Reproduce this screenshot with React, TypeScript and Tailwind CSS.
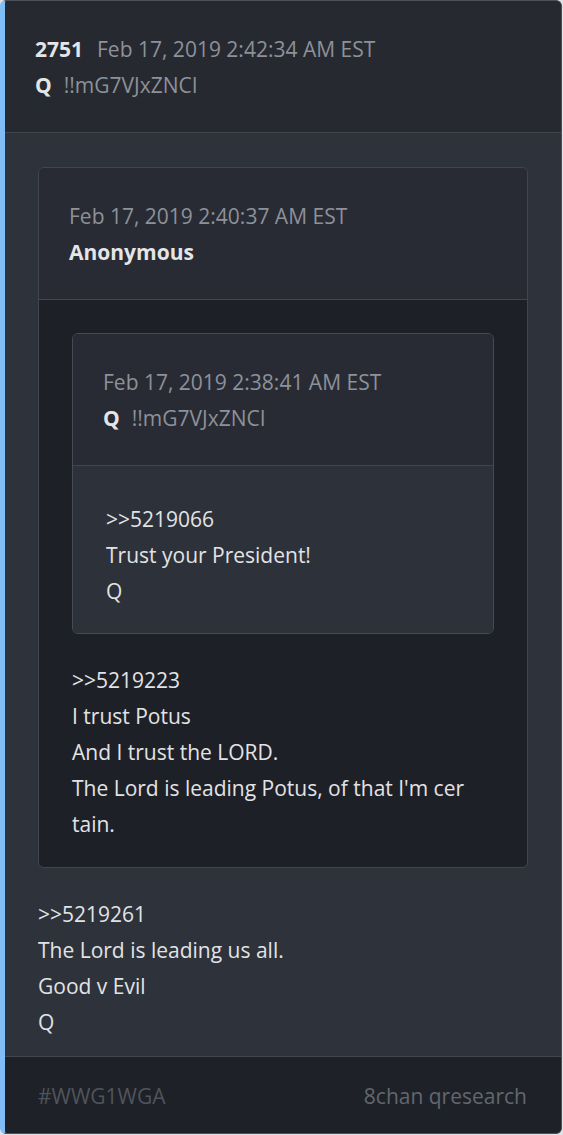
type Post = {
  date: string;
  name: string;
  trip?: string;
};

function PostHeader({ post, num }: { post: Post; num?: string }) {
  return (
    <div>
      <div className="flex items-center h-[36px]">
        {num && <span className="font-bold text-[#e4e5e7] mr-[14px]">{num}</span>}
        <span className="text-[#8d9199]">{post.date}</span>
      </div>
      <div className="flex items-center h-[36px]">
        <span className="font-bold text-[#e4e5e7]">{post.name}</span>
        {post.trip && <span className="ml-[12px] text-[#8d9199]">{post.trip}</span>}
      </div>
    </div>
  );
}

function Lines({ lines }: { lines: string[] }) {
  return (
    <div className="text-[#e2e3e5]">
      {lines.map((l, i) => (
        <p key={i} className="leading-[36px] whitespace-nowrap">
          {l}
        </p>
      ))}
    </div>
  );
}

export default function App() {
  return (
    <div
      className="w-[563px] h-[1135px] bg-[#dfe1e4] text-[21px] leading-[36px]"
      style={{ fontFamily: '"Open Sans", "Noto Sans", sans-serif' }}
    >
      <div className="w-[562px] rounded-[6px] overflow-hidden border border-[#4b5059] border-l-[5px] border-l-[#80bdf6] bg-[#2d323b]">
        {/* header */}
        <div className="bg-[#262930] pl-[30px] pr-[33px] pt-[30px] pb-[29px] border-b border-[#40454e]">
          <PostHeader num="2751" post={{ date: "Feb 17, 2019 2:42:34 AM EST", name: "Q", trip: "!!mG7VJxZNCI" }} />
        </div>

        {/* body */}
        <div className="px-[33px] pt-[34px] pb-[16px]">
          <div className="rounded-[6px] overflow-hidden border border-[#40454e]">
            <div className="bg-[#282b33] pl-[30px] pt-[30px] pb-[29px] border-b border-[#40454e]">
              <PostHeader post={{ date: "Feb 17, 2019 2:40:37 AM EST", name: "Anonymous" }} />
            </div>
            <div className="bg-[#1e2027] px-[33px] pt-[33px] pb-[25px]">
              <div className="rounded-[6px] overflow-hidden border border-[#454a53]">
                <div className="bg-[#282b33] pl-[30px] pt-[30px] pb-[29px] border-b border-[#40454e]">
                  <PostHeader post={{ date: "Feb 17, 2019 2:38:41 AM EST", name: "Q", trip: "!!mG7VJxZNCI" }} />
                </div>
                <div className="bg-[#2d313a] px-[33px] pt-[35px] pb-[24px]">
                  <Lines lines={[">>5219066", "Trust your President!", "Q"]} />
                </div>
              </div>
              <div className="mt-[28px]">
                <Lines
                  lines={[
                    ">>5219223",
                    "I trust Potus",
                    "And I trust the LORD.",
                    "The Lord is leading Potus, of that I'm cer",
                    "tain.",
                  ]}
                />
              </div>
            </div>
          </div>
          <div className="mt-[28px]">
            <Lines lines={[">>5219261", "The Lord is leading us all.", "Good v Evil", "Q"]} />
          </div>
        </div>

        {/* footer */}
        <div className="bg-[#1f2128] border-t border-[#40454e] pl-[33px] pr-[34px] pt-[21px] pb-[19px] flex justify-between">
          <span className="text-[#4f545c]">#WWG1WGA</span>
          <span className="text-[#62676f]">8chan qresearch</span>
        </div>
      </div>
    </div>
  );
}
